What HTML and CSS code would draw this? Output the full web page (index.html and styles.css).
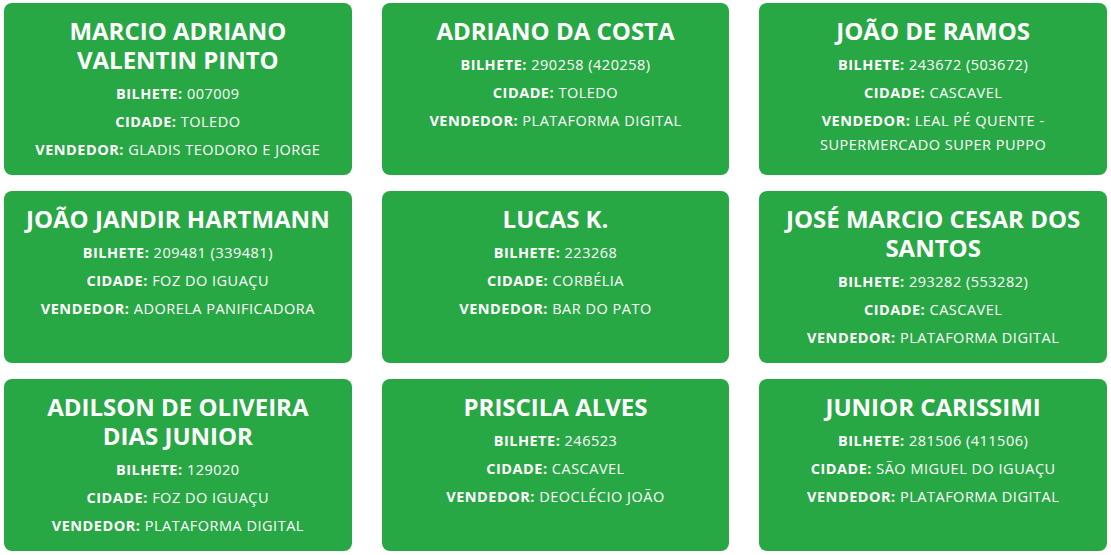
FILE: index.html
```html
<!DOCTYPE html>
<html lang="pt-BR">
<head>
<meta charset="utf-8">
<title>Ganhadores</title>
<link rel="stylesheet" href="styles.css">
</head>
<body>
<main class="grid">
  <section class="card">
    <h4 class="name">MARCIO ADRIANO VALENTIN PINTO</h4>
    <p class="info"><b>BILHETE:</b> 007009</p>
    <p class="info"><b>CIDADE:</b> TOLEDO</p>
    <p class="info"><b>VENDEDOR:</b> GLADIS TEODORO E JORGE</p>
  </section>
  <section class="card">
    <h4 class="name">ADRIANO DA COSTA</h4>
    <p class="info"><b>BILHETE:</b> 290258 (420258)</p>
    <p class="info"><b>CIDADE:</b> TOLEDO</p>
    <p class="info"><b>VENDEDOR:</b> PLATAFORMA DIGITAL</p>
  </section>
  <section class="card">
    <h4 class="name">JOÃO DE RAMOS</h4>
    <p class="info"><b>BILHETE:</b> 243672 (503672)</p>
    <p class="info"><b>CIDADE:</b> CASCAVEL</p>
    <p class="info"><b>VENDEDOR:</b> LEAL PÉ QUENTE - SUPERMERCADO SUPER PUPPO</p>
  </section>
  <section class="card">
    <h4 class="name">JOÃO JANDIR HARTMANN</h4>
    <p class="info"><b>BILHETE:</b> 209481 (339481)</p>
    <p class="info"><b>CIDADE:</b> FOZ DO IGUAÇU</p>
    <p class="info"><b>VENDEDOR:</b> ADORELA PANIFICADORA</p>
  </section>
  <section class="card">
    <h4 class="name">LUCAS K.</h4>
    <p class="info"><b>BILHETE:</b> 223268</p>
    <p class="info"><b>CIDADE:</b> CORBÉLIA</p>
    <p class="info"><b>VENDEDOR:</b> BAR DO PATO</p>
  </section>
  <section class="card">
    <h4 class="name">JOSÉ MARCIO CESAR DOS SANTOS</h4>
    <p class="info"><b>BILHETE:</b> 293282 (553282)</p>
    <p class="info"><b>CIDADE:</b> CASCAVEL</p>
    <p class="info"><b>VENDEDOR:</b> PLATAFORMA DIGITAL</p>
  </section>
  <section class="card">
    <h4 class="name">ADILSON DE OLIVEIRA DIAS JUNIOR</h4>
    <p class="info"><b>BILHETE:</b> 129020</p>
    <p class="info"><b>CIDADE:</b> FOZ DO IGUAÇU</p>
    <p class="info"><b>VENDEDOR:</b> PLATAFORMA DIGITAL</p>
  </section>
  <section class="card">
    <h4 class="name">PRISCILA ALVES</h4>
    <p class="info"><b>BILHETE:</b> 246523</p>
    <p class="info"><b>CIDADE:</b> CASCAVEL</p>
    <p class="info"><b>VENDEDOR:</b> DEOCLÉCIO JOÃO</p>
  </section>
  <section class="card">
    <h4 class="name">JUNIOR CARISSIMI</h4>
    <p class="info"><b>BILHETE:</b> 281506 (411506)</p>
    <p class="info"><b>CIDADE:</b> SÃO MIGUEL DO IGUAÇU</p>
    <p class="info"><b>VENDEDOR:</b> PLATAFORMA DIGITAL</p>
  </section>
</main>
</body>
</html>
```

FILE: styles.css
```css
* { box-sizing: border-box; }
html, body { margin: 0; padding: 0; background: #ffffff; }
body {
  font-family: "Open Sans", "Noto Sans", "Liberation Sans", sans-serif;
  color: #ffffff;
}
.grid {
  display: grid;
  grid-template-columns: repeat(3, 1fr);
  column-gap: 30px;
  row-gap: 16px;
  padding: 3px 4px 4px 4px;
}
.card {
  background: #28a745;
  border-radius: 8px;
  padding: 13px 18px 13px;
  text-align: center;
  display: flex;
  flex-direction: column;
  gap: 4px;
}
.name {
  margin: 0 0 4px;
  font-size: 24px;
  line-height: 29px;
  font-weight: 700;
}
.info {
  margin: 0;
  font-size: 14.5px;
  letter-spacing: 0.5px;
  line-height: 24px;
}
.info b { font-weight: 700; }
```
